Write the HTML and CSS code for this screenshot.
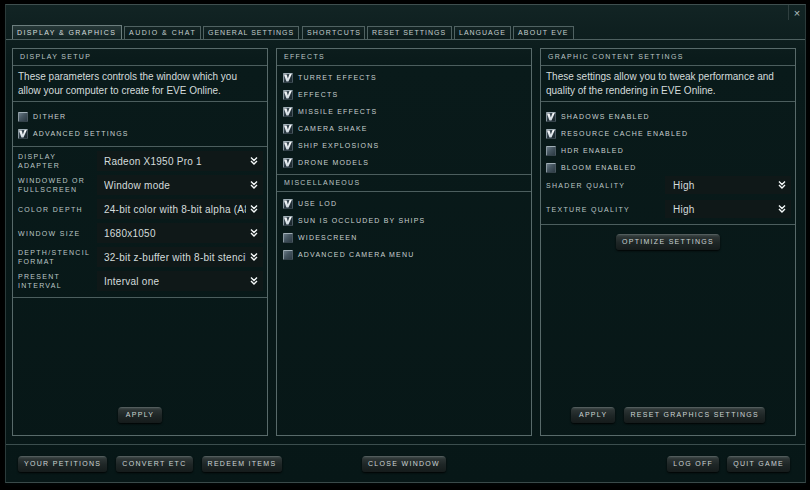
FILE: index.html
```html
<!DOCTYPE html>
<html>
<head>
<meta charset="utf-8">
<link rel="stylesheet" href="styles.css">
</head>
<body>
<div class="window">
  <div class="titlebar"><span class="close">×</span></div>
  <div class="tabs">
    <span class="tab active t-display">DISPLAY &amp; GRAPHICS</span>
    <span class="tab t-audio">AUDIO &amp; CHAT</span>
    <span class="tab t-general">GENERAL SETTINGS</span>
    <span class="tab t-shortcuts">SHORTCUTS</span>
    <span class="tab t-reset">RESET SETTINGS</span>
    <span class="tab t-language">LANGUAGE</span>
    <span class="tab t-about">ABOUT EVE</span>
  </div>
  <div class="panels">
    <section class="panel">
      <div class="ph">DISPLAY SETUP</div>
      <div class="desc">These parameters controls the window which you allow your computer to create for EVE Online.</div>
      <div class="checks sep">
        <div class="ck"><span class="cb"></span>DITHER</div>
        <div class="ck"><span class="cb on"></span>ADVANCED SETTINGS</div>
      </div>
      <div class="rows sep">
        <div class="row"><span class="lbl">DISPLAY<br>ADAPTER</span><span class="field"><span class="val">Radeon X1950 Pro 1</span><svg class="arr" viewBox="0 0 8 8"><path d="M1 0.5L4 3.5L7 0.5M1 4L4 7L7 4"/></svg></span></div>
        <div class="row"><span class="lbl">WINDOWED OR<br>FULLSCREEN</span><span class="field"><span class="val">Window mode</span><svg class="arr" viewBox="0 0 8 8"><path d="M1 0.5L4 3.5L7 0.5M1 4L4 7L7 4"/></svg></span></div>
        <div class="row"><span class="lbl">COLOR DEPTH</span><span class="field"><span class="val">24-bit color with 8-bit alpha (A8R8G8B8)</span><svg class="arr" viewBox="0 0 8 8"><path d="M1 0.5L4 3.5L7 0.5M1 4L4 7L7 4"/></svg></span></div>
        <div class="row"><span class="lbl">WINDOW SIZE</span><span class="field"><span class="val">1680x1050</span><svg class="arr" viewBox="0 0 8 8"><path d="M1 0.5L4 3.5L7 0.5M1 4L4 7L7 4"/></svg></span></div>
        <div class="row"><span class="lbl">DEPTH/STENCIL<br>FORMAT</span><span class="field"><span class="val">32-bit z-buffer with 8-bit stencil</span><svg class="arr" viewBox="0 0 8 8"><path d="M1 0.5L4 3.5L7 0.5M1 4L4 7L7 4"/></svg></span></div>
        <div class="row"><span class="lbl">PRESENT<br>INTERVAL</span><span class="field"><span class="val">Interval one</span><svg class="arr" viewBox="0 0 8 8"><path d="M1 0.5L4 3.5L7 0.5M1 4L4 7L7 4"/></svg></span></div>
      </div>
      <div class="actions"><span class="btn btn-apply">APPLY</span></div>
    </section>

    <section class="panel">
      <div class="ph">EFFECTS</div>
      <div class="list sep">
        <div class="ck"><span class="cb on"></span>TURRET EFFECTS</div>
        <div class="ck"><span class="cb on"></span>EFFECTS</div>
        <div class="ck"><span class="cb on"></span>MISSILE EFFECTS</div>
        <div class="ck"><span class="cb on"></span>CAMERA SHAKE</div>
        <div class="ck"><span class="cb on"></span>SHIP EXPLOSIONS</div>
        <div class="ck"><span class="cb on"></span>DRONE MODELS</div>
      </div>
      <div class="ph">MISCELLANEOUS</div>
      <div class="list">
        <div class="ck"><span class="cb on"></span>USE LOD</div>
        <div class="ck"><span class="cb on"></span>SUN IS OCCLUDED BY SHIPS</div>
        <div class="ck"><span class="cb"></span>WIDESCREEN</div>
        <div class="ck"><span class="cb"></span>ADVANCED CAMERA MENU</div>
      </div>
    </section>

    <section class="panel">
      <div class="ph">GRAPHIC CONTENT SETTINGS</div>
      <div class="desc">These settings allow you to tweak performance and quality of the rendering in EVE Online.</div>
      <div class="gfx sep">
        <div class="ck"><span class="cb on"></span>SHADOWS ENABLED</div>
        <div class="ck"><span class="cb on"></span>RESOURCE CACHE ENABLED</div>
        <div class="ck"><span class="cb"></span>HDR ENABLED</div>
        <div class="ck"><span class="cb"></span>BLOOM ENABLED</div>
        <div class="row2"><span class="lbl">SHADER QUALITY</span><span class="field"><span class="val">High</span><svg class="arr" viewBox="0 0 8 8"><path d="M1 0.5L4 3.5L7 0.5M1 4L4 7L7 4"/></svg></span></div>
        <div class="row2"><span class="lbl">TEXTURE QUALITY</span><span class="field"><span class="val">High</span><svg class="arr" viewBox="0 0 8 8"><path d="M1 0.5L4 3.5L7 0.5M1 4L4 7L7 4"/></svg></span></div>
      </div>
      <div class="optimize"><span class="btn">OPTIMIZE SETTINGS</span></div>
      <div class="actions"><span class="btn btn-apply">APPLY</span><span class="btn">RESET GRAPHICS SETTINGS</span></div>
    </section>
  </div>
  <div class="footer">
    <div class="fgroup"><span class="btn">YOUR PETITIONS</span><span class="btn">CONVERT ETC</span><span class="btn">REDEEM ITEMS</span></div>
    <div class="fgroup center"><span class="btn">CLOSE WINDOW</span></div>
    <div class="fgroup right"><span class="btn">LOG OFF</span><span class="btn">QUIT GAME</span></div>
  </div>
</div>
</body>
</html>
```
FILE: styles.css
```css
* { box-sizing: border-box; margin: 0; padding: 0; }
html, body { width: 810px; height: 490px; background: #000; overflow: hidden; }
body {
  font-family: "Liberation Sans", Arial, sans-serif;
  color: #c8d0d0;
  padding: 4px 0 0 5px;
}
.window {
  position: relative;
  width: 801px;
  height: 479px;
  border: 1px solid #2b3a3a;
  border-top-color: #3f4f4f;
  border-bottom-color: #3a4a4a;
  background: linear-gradient(#122424 0, #0d1e1e 36px, #091a1a 60px, #071717 100%);
  display: flex;
  flex-direction: column;
  box-shadow: 0 2px 3px #020606;
}
.titlebar { height: 20px; flex: none; }
.close {
  position: absolute;
  top: 0;
  right: 0;
  width: 17px;
  height: 15px;
  border-left: 1px solid #2f3f3f;
  color: #b4c0c0;
  font-size: 11px;
  line-height: 14px;
  text-align: center;
  padding-top: 1px;
}
.tabs {
  height: 15px;
  flex: none;
  display: flex;
  align-items: flex-end;
  gap: 2px;
  padding-left: 6px;
  border-bottom: 1px solid #4e6060;
}
.tab {
  flex: none;
  height: 13px;
  border: 1px solid #506262;
  border-bottom: 0;
  padding: 0 0 0 4px;
  font-size: 7px;
  letter-spacing: 1.2px;
  line-height: 12px;
  color: #c4cece;
  background: linear-gradient(#132424, #0b1a1a);
  white-space: nowrap;
  overflow: hidden;
}
.tab.active {
  height: 14px;
  line-height: 13px;
  border-color: #6c7e7e;
  background: linear-gradient(#263838, #112222);
  color: #d6dede;
}
.t-display { width: 110px; letter-spacing: 1.4px; }
.t-audio { width: 77px; letter-spacing: 1.5px; }
.t-general { width: 96px; letter-spacing: 1px; }
.t-shortcuts { width: 63px; margin-left: 1px; }
.t-reset { width: 85px; letter-spacing: 1px; }
.t-language { width: 57px; letter-spacing: 1px; }
.t-about { width: 61px; }
.panels {
  display: flex;
  gap: 8px;
  padding-left: 6px;
  margin-top: 8px;
  height: 388px;
  flex: none;
}
.panel {
  width: 256px;
  height: 388px;
  border: 1px solid #586a6a;
  display: flex;
  flex-direction: column;
}
.ph {
  height: 17px;
  flex: none;
  border-bottom: 1px solid #4c5e5e;
  padding-left: 7px;
  font-size: 7px;
  letter-spacing: 1.3px;
  line-height: 16px;
  color: #bcc6c6;
}
.desc {
  height: 36px;
  flex: none;
  border-bottom: 1px solid #4c5e5e;
  padding: 4px 5px 0 5px;
  font-size: 10px;
  line-height: 14px;
  color: #d4dcdc;
}
.sep { border-bottom: 1px solid #4c5e5e; flex: none; }
.ck {
  height: 17px;
  display: flex;
  align-items: center;
  gap: 5px;
  font-size: 7px;
  letter-spacing: 1.2px;
  color: #c8d0d0;
  white-space: nowrap;
}
.cb {
  position: relative;
  width: 10px;
  height: 10px;
  flex: none;
  border: 1px solid;
  border-color: #a0aeb6 #4a5860 #34424a #8a98a0;
  background: linear-gradient(135deg, #6a7a86 0%, #455560 45%, #2c3a44 100%);
  border-radius: 1px;
}
.cb.on {
  background: linear-gradient(135deg, #556470 0%, #24323a 60%, #1a262c 100%);
}
.cb.on::after {
  content: "";
  position: absolute;
  left: 0;
  top: 0;
  width: 8px;
  height: 8px;
  background: linear-gradient(#ffffff, #c8d4dc);
  clip-path: polygon(0% 12%, 32% 12%, 48% 62%, 72% 0%, 100% 0%, 56% 100%, 30% 100%);
}
.checks { height: 45px; padding: 6px 0 0 5px; }
.rows {
  height: 151px;
  padding: 4px 4px 0 5px;
  display: flex;
  flex-direction: column;
  gap: 4px;
}
.row {
  height: 20px;
  display: flex;
  align-items: center;
}
.lbl {
  font-size: 7px;
  letter-spacing: 1.3px;
  line-height: 9px;
  color: #bcc6c6;
  white-space: nowrap;
}
.row .lbl { width: 79px; flex: none; }
.field {
  flex: 1;
  height: 100%;
  display: flex;
  align-items: center;
  background: #0f1818;
  padding: 0 5px 0 7px;
  min-width: 0;
}
.val {
  flex: 1;
  min-width: 0;
  overflow: hidden;
  white-space: nowrap;
  font-size: 10px;
  letter-spacing: 0.25px;
  color: #d4dcdc;
}
.arr {
  width: 8px;
  height: 8px;
  flex: none;
  margin-left: 4px;
}
.arr path { fill: none; stroke: #f4f8f8; stroke-width: 1.4; }
.actions {
  margin-top: auto;
  padding-bottom: 12px;
  display: flex;
  justify-content: center;
  gap: 9px;
}
.list { padding: 3px 0 3px 6px; flex: none; }
.gfx {
  height: 123px;
  padding: 6px 4px 0 5px;
  display: flex;
  flex-direction: column;
}
.row2 {
  height: 18px;
  display: flex;
  align-items: center;
}
.row2 + .row2 { margin-top: 6px; }
.row2 .lbl { width: 119px; flex: none; }
.row2 .field { padding-left: 8px; }
.optimize {
  padding-top: 9px;
  display: flex;
  justify-content: center;
}
.btn {
  display: inline-block;
  height: 16px;
  padding: 0 6px;
  border-radius: 4px 4px 3px 3px;
  background: linear-gradient(#667070 0, #3e4848 1px, #2c3434 3px, #1e2626 55%, #151b1b 100%);
  box-shadow: 0 1px 2px rgba(0, 0, 0, 0.9);
  font-size: 7px;
  letter-spacing: 1.3px;
  line-height: 16px;
  color: #ccd4d4;
  white-space: nowrap;
}
.btn-apply { padding: 0 8px; }
.footer {
  margin-top: 8px;
  border-top: 1px solid #3c4e4e;
  padding: 11px 15px 0 12px;
  display: grid;
  grid-template-columns: 1fr auto 1fr;
}
.fgroup { display: flex; gap: 9px; }
.fgroup.right { justify-content: flex-end; gap: 8px; }
```
